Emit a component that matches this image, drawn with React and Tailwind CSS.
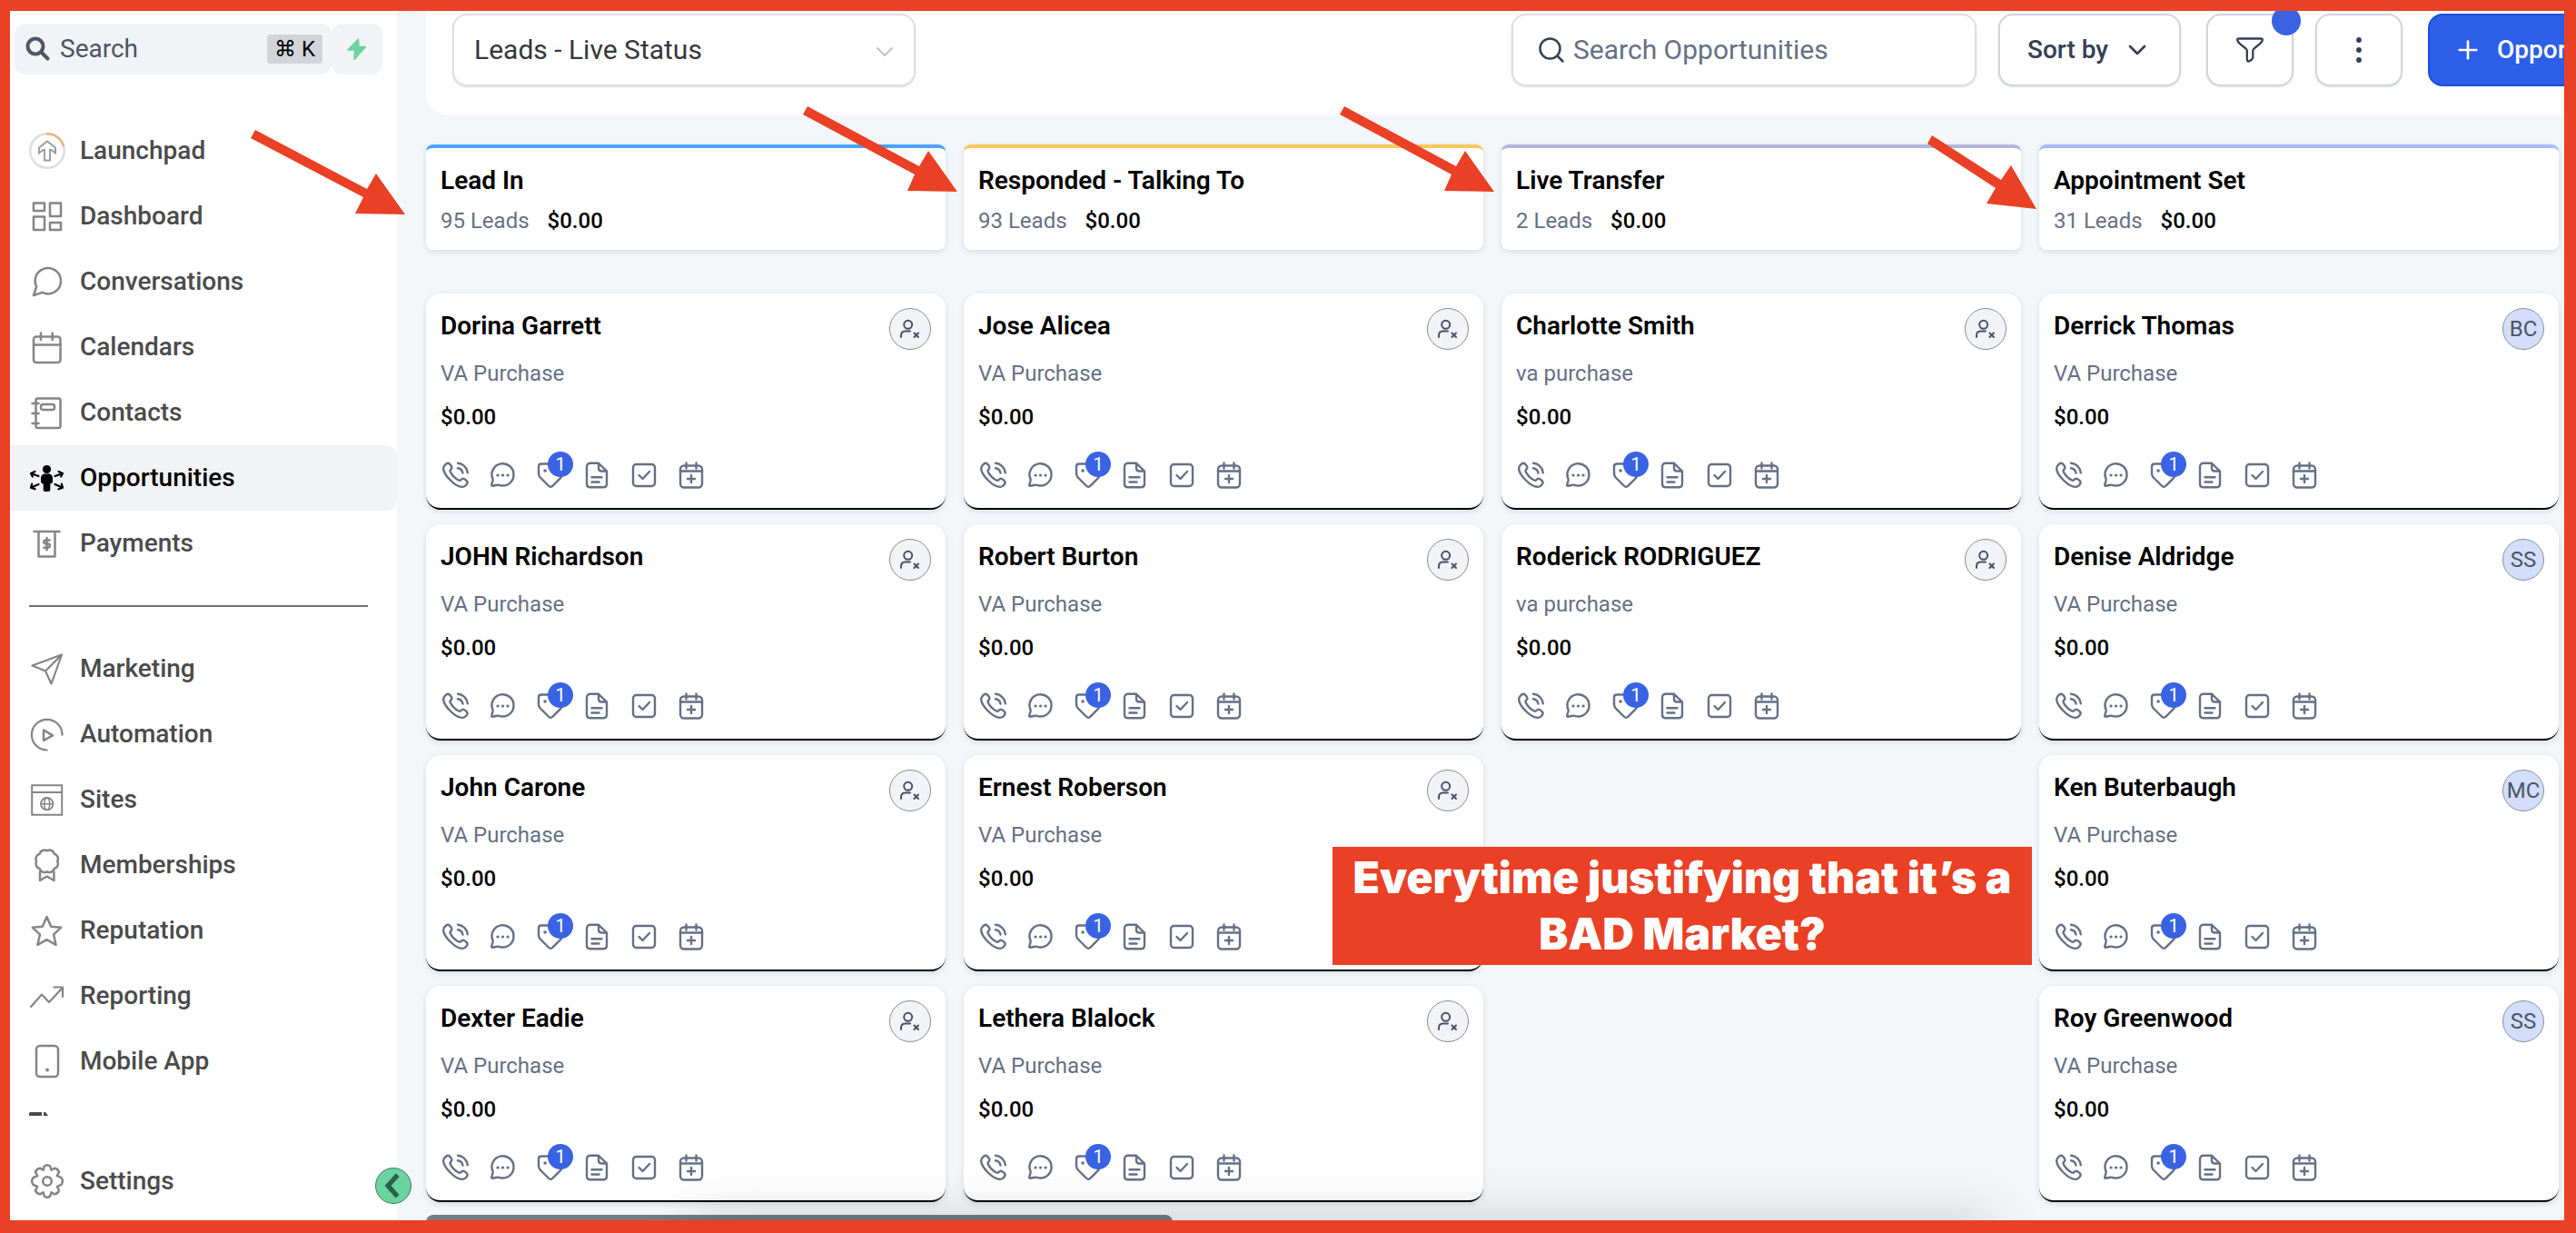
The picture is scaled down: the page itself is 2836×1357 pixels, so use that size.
import { ChevronDown, Plus } from 'lucide-react';

const NAV_MAIN = [
  { label: 'Launchpad', icon: 'launchpad' },
  { label: 'Dashboard', icon: 'dashboard' },
  { label: 'Conversations', icon: 'conversations' },
  { label: 'Calendars', icon: 'calendars' },
  { label: 'Contacts', icon: 'contacts' },
  { label: 'Opportunities', icon: 'opportunities', active: true },
  { label: 'Payments', icon: 'payments' },
];

const NAV_MORE = [
  { label: 'Marketing', icon: 'marketing' },
  { label: 'Automation', icon: 'automation' },
  { label: 'Sites', icon: 'sites' },
  { label: 'Memberships', icon: 'memberships' },
  { label: 'Reputation', icon: 'reputation' },
  { label: 'Reporting', icon: 'reporting' },
  { label: 'Mobile App', icon: 'mobile' },
];

const STAGES = [
  {
    title: 'Lead In',
    count: 95,
    accent: 'border-[#4aa3ff]',
    cards: [
      { name: 'Dorina Garrett', source: 'VA Purchase' },
      { name: 'JOHN Richardson', source: 'VA Purchase' },
      { name: 'John Carone', source: 'VA Purchase' },
      { name: 'Dexter Eadie', source: 'VA Purchase' },
    ],
  },
  {
    title: 'Responded - Talking To',
    count: 93,
    accent: 'border-[#f7c95c]',
    cards: [
      { name: 'Jose Alicea', source: 'VA Purchase' },
      { name: 'Robert Burton', source: 'VA Purchase' },
      { name: 'Ernest Roberson', source: 'VA Purchase' },
      { name: 'Lethera Blalock', source: 'VA Purchase' },
    ],
  },
  {
    title: 'Live Transfer',
    count: 2,
    accent: 'border-[#b1b7d9]',
    cards: [
      { name: 'Charlotte Smith', source: 'va purchase' },
      { name: 'Roderick RODRIGUEZ', source: 'va purchase' },
    ],
  },
  {
    title: 'Appointment Set',
    count: 31,
    accent: 'border-[#a9bbff]',
    cards: [
      { name: 'Derrick Thomas', source: 'VA Purchase', owner: 'BC' },
      { name: 'Denise Aldridge', source: 'VA Purchase', owner: 'SS' },
      { name: 'Ken Buterbaugh', source: 'VA Purchase', owner: 'MC' },
      { name: 'Roy Greenwood', source: 'VA Purchase', owner: 'SS' },
    ],
  },
];

// Sidebar glyphs, all on a 40 x 40 grid.
const NAV_ICONS = {
  launchpad: (
    <>
      <circle cx="20" cy="20" r="18.8" stroke="#dcdde0" />
      <path d="M20 1.2a18.8 18.8 0 0 1 17.8 12.8" stroke="#eeb27c" />
      <path
        d="M20 9.5 11 16.5v6l4.5-3.5h1.5v11.5h6V19h1.5l4.5 3.5v-6z"
        stroke="#9b9ea4"
        strokeWidth="2"
        strokeLinejoin="miter"
      />
    </>
  ),
  dashboard: (
    <>
      <rect x="5" y="5.5" width="12" height="8.5" />
      <rect x="23" y="5.5" width="12" height="14.5" />
      <rect x="5" y="20.5" width="12" height="14.5" />
      <rect x="23" y="27" width="12" height="8" />
    </>
  ),
  conversations: (
    <path
      transform="scale(1.667)"
      strokeWidth="1.5"
      d="M21 11.5a8.5 8.5 0 0 1-12.3 7.6L3 21l1.9-5.7A8.38 8.38 0 0 1 4 11.5a8.5 8.5 0 1 1 17 0z"
    />
  ),
  calendars: (
    <>
      <rect x="5" y="8.5" width="29.5" height="28.5" rx="3" />
      <path d="M5 17.5h29.5M13 4.5V12M25.7 4.5V12" />
    </>
  ),
  contacts: (
    <>
      <rect x="7.5" y="4.5" width="27" height="32.5" rx="2" />
      <path d="M3.5 10h7M3.5 21h7M3.5 32h7" />
      <rect x="13" y="11" width="15" height="6" rx="2.5" />
    </>
  ),
  opportunities: (
    <>
      <circle cx="19.5" cy="10.5" r="4.6" fill="currentColor" stroke="none" />
      <path
        d="M17 15.5h5c2.5 0 4 2.5 4 5v3.5c0 1.5-1.5 2.5-2.7 2.5V33c0 1.2-.8 2-2 2h-3.6c-1.2 0-2-.8-2-2v-6.5C14.5 26.5 13 25.5 13 24v-3.5c0-2.5 1.5-5 4-5z"
        fill="currentColor"
        stroke="none"
      />
      <path
        d="M10.5 18 2.500 15.200M6.500 13 2 15l1.800 3.500M28.500 18l8-2.800M32.500 13l4.500 2-1.800 3.500M10.500 27l-8 3.500M3.200 26.500 2 30.800l4.500 1.500M28.500 27l8 3.500M35.800 26.500l1.200 4.300-4.500 1.500"
        strokeWidth="2.2"
      />
    </>
  ),
  payments: (
    <>
      <path d="M5.5 7h28M10.5 7v27.5h18V7" />
      <path
        transform="translate(12 13) scale(.63)"
        strokeWidth="4"
        d="M12 1.5v21M17 5.5H10a3.25 3.25 0 0 0 0 6.5h4a3.25 3.25 0 0 1 0 6.5H7"
      />
    </>
  ),
  marketing: <path d="M36 4.5 3.5 16.5 18 22.5l6.5 14zM36 4.5l-18 18" strokeWidth="2.2" />,
  automation: (
    <>
      <path d="M36.5 20.7A16.8 16.8 0 1 0 19.7 37.5" strokeWidth="2.2" />
      <path d="M16 15.5v11.5l10-5.7z" />
    </>
  ),
  sites: (
    <>
      <path d="M3.2 4.3h33v32.5h-33zM3.2 12h33" strokeLinejoin="miter" strokeWidth="2" />
      <circle cx="19.7" cy="24.7" r="6.7" strokeWidth="1.8" />
      <ellipse cx="19.7" cy="24.7" rx="3" ry="6.7" strokeWidth="1.5" />
      <path d="M13 24.7h13.4" strokeWidth="1.5" />
    </>
  ),
  memberships: (
    <>
      <path d="M31.2 15.8A5.5 5.5 0 0 1 27.8 23.9A5.5 5.5 0 0 1 19.7 27.3A5.5 5.5 0 0 1 11.6 23.9A5.5 5.5 0 0 1 8.2 15.8A5.5 5.5 0 0 1 11.6 7.7A5.5 5.5 0 0 1 19.7 4.3A5.5 5.5 0 0 1 27.8 7.7A5.5 5.5 0 0 1 31.2 15.8z" />
      <path d="M12 27.5v9.5l7.7-4.5 7.7 4.5v-9.5" />
    </>
  ),
  reputation: (
    <path
      transform="translate(-.3 1) scale(1.65)"
      strokeWidth="1.5"
      d="M12 2.5 14.9 9l6.6.6-4.9 4.6 1.5 6.9-6.1-3.4-6.1 3.4 1.5-6.9L2.5 9.6 9.1 9z"
    />
  ),
  reporting: <path d="M2 32 14 18.5l8 8.5L37 11M27.5 10.5H37v10.5" strokeWidth="2.2" />,
  mobile: (
    <>
      <rect x="8" y="3" width="24" height="34" rx="4" />
      <circle cx="20" cy="29.5" r="2" fill="currentColor" stroke="none" />
    </>
  ),
  settings: (
    <>
      <circle cx="20" cy="20" r="4.8" />
      <path d="M16.8 3.5q3.2-2.5 6.4 0l1.2 4.2 3.8-2q3.5.5 4.8 4.3l-2.2 4.2 4.5 1.8q3.2 4 0 8l-4.5 1.8 2.2 4.2q-1.3 3.8-4.8 4.3l-3.8-2-1.2 4.2q-3.2 2.5-6.4 0l-1.2-4.2-3.8 2q-3.5-.5-4.8-4.3l2.2-4.2L4.7 24q-3.2-4 0-8l4.5-1.8L7 10q1.3-3.8 4.8-4.3l3.8 2z" />
    </>
  ),
};

// Quick actions on every card, 32 x 32 grid.
const CARD_ACTIONS = [
  {
    label: 'Call',
    icon: (
      <path d="M19 2.8a11.5 11.5 0 0 1 10.8 10.5M19 8.3a6.5 6.5 0 0 1 5.5 5.3M10.8 12.3c.9 2 2.2 3.8 3.8 5.4s3.4 2.9 5.4 3.8c1 .5 1.6.4 2.3-.3 1.2-1.2 2-1.8 3.2-1.4 1 .3 2 1.2 3 2.1 1.2 1.2 1.4 2.6.4 3.9-1.2 1.5-2.2 3-4.5 3.1-3.2.2-8.5-2.3-13.6-7.4S3 11.200 3.200 8c.1-2.300 1.600-3.300 3.100-4.500 1.300-1 2.700-.8 3.900.4 1 1 1.800 2 2.100 3 .4 1.200-.2 2-1.300 3.200-.6.700-.7 1.200-.2 2.200z" />
    ),
  },
  {
    label: 'Message',
    icon: (
      <>
        <path d="M28.5 15.5A12 12 0 0 1 16.5 27.5c-1.5 0-2.9-.2-4.2-.7-.8-.3-1.2-.2-2 0l-5 .9c-.8.1-1.3-.5-1.1-1.200l1.300-4.500c.2-.8.2-1.200 0-2A12 12 0 1 1 28.500 15.500z" />
        <path d="M11 16h.1M16.5 16h.1M22 16h.1" strokeWidth="3.2" />
      </>
    ),
  },
  {
    label: 'Tags',
    badge: '1',
    icon: (
      <>
        <path d="M4 14V6.5C4 4.5 5 3.5 7 3.5h8c1.5 0 2.4.4 3.5 1.5l9.5 9.5c1.7 1.7 1.7 3 0 4.7l-8 8c-2.200 2.200-3.300 2.200-5.200.3l-9.500-9.500C4.300 16.500 4 15.500 4 14z" />
        <path d="M11 11h.1" strokeWidth="3.5" />
      </>
    ),
  },
  {
    label: 'Notes',
    icon: (
      <path d="M18 2.8H9C6.5 2.8 5 4.3 5 6.8v18.5c0 2.5 1.5 4 4 4h14c2.5 0 4-1.5 4-4V11.5zM18 2.8v5.5c0 2 1 3.2 3.2 3.2H27M10.5 18.2h11M10.5 23.5h8" />
    ),
  },
  {
    label: 'Tasks',
    icon: (
      <>
        <rect x="4" y="4" width="24" height="24" rx="3.5" />
        <path d="m10.5 16 4 4 7.5-8" />
      </>
    ),
  },
  {
    label: 'Appointments',
    icon: (
      <>
        <rect x="4" y="5.5" width="24" height="24" rx="4" />
        <path d="M4 11.5h24M10.5 2.5v6M21.5 2.5v6M16 16v8M12 20h8" />
      </>
    ),
  },
];

// Annotation arrows that point at each stage header.
const ARROWS = [
  'M281 143 404 208 414 191 446 236 391 235 400 217 276 152z',
  'M889 117 1012 183 1022 166 1054 211 999 210 1007 192 884 126z',
  'M1480 117 1603 183 1613 166 1645 211 1590 210 1598 192 1475 126z',
  'M2127 149 2203 198 2214 182 2242 230 2187 224 2197 207 2122 158z',
];

function NavItem({ item }) {
  return (
    <a
      href="#"
      className={`flex h-[72px] items-center gap-4 rounded-r-xl pl-[21px] text-[28px] font-medium ${
        item.active ? 'bg-[#f2f3f5] text-black' : 'text-[#4b4b4b]'
      }`}
    >
      <svg
        viewBox="0 0 40 40"
        className={`size-10 ${item.active ? 'text-black' : 'text-[#858585]'}`}
        fill="none"
        stroke="currentColor"
        strokeWidth="2.5"
        strokeLinecap="round"
        strokeLinejoin="round"
        aria-hidden="true"
      >
        {NAV_ICONS[item.icon]}
      </svg>
      <span>{item.label}</span>
    </a>
  );
}

function Sidebar() {
  return (
    <aside className="relative flex w-[426px] shrink-0 flex-col bg-white">
      <div className="flex pt-[14px] pl-[5px]">
        <label className="flex h-14 w-[349px] items-center rounded-xl bg-[#f2f3f5] px-[10px]">
          <svg viewBox="0 0 32 32" className="size-8 shrink-0" fill="none" stroke="#4b5768" strokeWidth="4" strokeLinecap="round" aria-hidden="true">
            <circle cx="13" cy="13" r="8.5" />
            <path d="m19.5 19.5 7 7" />
          </svg>
          <input
            type="text"
            aria-label="Search"
            placeholder="Search"
            className="min-w-0 flex-1 bg-transparent pl-2 text-[28px] text-[#4b5563] outline-none placeholder:text-[#4b5563]"
          />
          <kbd className="flex h-8 items-center rounded bg-[#d1d4d9] px-2 font-[Roboto,'DejaVu_Sans',sans-serif] text-2xl text-black">⌘ K</kbd>
        </label>
        <button type="button" aria-label="Quick actions" className="flex size-14 items-center justify-center rounded-xl bg-[#f2f3f5]">
          <svg viewBox="0 0 24 26" className="h-[26px] w-6" fill="#6bd3a0" stroke="#6bd3a0" strokeWidth="1.5" strokeLinejoin="round" aria-hidden="true">
            <path d="M13.5 2 2 14h7.5l-.5 10.5L21.5 10.5H14z" />
          </svg>
        </button>
      </div>

      <nav className="mt-12">
        {NAV_MAIN.map((item) => (
          <NavItem key={item.label} item={item} />
        ))}
        <hr className="mt-8 mr-8 mb-8 ml-[21px] border-t-2 border-[#6e7080]" />
        {NAV_MORE.map((item) => (
          <NavItem key={item.label} item={item} />
        ))}
        <svg viewBox="0 0 24 4" className="mt-5 ml-[21px] h-1 w-6" fill="#4b4b4b" aria-hidden="true">
          <path d="M1 0h13v4H0V1zM16 0h2l3 4h-5z" />
        </svg>
      </nav>

      <div className="mt-9">
        <NavItem item={{ label: 'Settings', icon: 'settings' }} />
      </div>

      <button
        type="button"
        aria-label="Collapse sidebar"
        className="absolute -right-4 bottom-[18px] z-10 flex size-10 items-center justify-center rounded-full border border-[#3f7a5e] bg-[#6bd3a0]"
      >
        <svg viewBox="0 0 24 24" className="size-7" fill="none" stroke="#27634a" strokeWidth="4.5" aria-hidden="true">
          <path d="M16 2 7 12l9 10" />
        </svg>
      </button>
    </aside>
  );
}

function Toolbar() {
  return (
    <header className="-mr-[100px] flex justify-between rounded-bl-3xl bg-white pt-[3px] pb-8 pl-[29px]">
      <div className="relative">
        <select
          aria-label="Pipeline"
          className="h-20 w-[510px] appearance-none rounded-2xl border-2 border-[#dddfe5] bg-white px-[22px] text-3xl text-[#36373d] shadow-sm"
        >
          <option>Leads - Live Status</option>
        </select>
        <ChevronDown className="pointer-events-none absolute top-[26px] right-[18px] size-8 text-[#c0c2c7]" strokeWidth={1.5} />
      </div>

      <div className="flex gap-7">
        <div className="flex gap-6">
          <label className="flex h-20 w-[512px] items-center rounded-2xl border-2 border-[#dddfe5] bg-white pl-[26px] shadow-sm">
            <svg viewBox="0 0 32 32" className="size-8 shrink-0" fill="none" stroke="#344054" strokeWidth="2.5" strokeLinecap="round" aria-hidden="true">
              <circle cx="14.5" cy="14.5" r="11" />
              <path d="m23 23 5.5 5.5" />
            </svg>
            <input
              type="text"
              aria-label="Search Opportunities"
              placeholder="Search Opportunities"
              className="min-w-0 flex-1 bg-transparent pl-2 text-3xl outline-none placeholder:text-[#667085]"
            />
          </label>
          <button
            type="button"
            className="flex h-20 w-[201px] items-center justify-center gap-4 rounded-2xl border-2 border-[#d0d5dd] bg-white text-[28px] font-medium text-[#344054] shadow-sm"
          >
            Sort by
            <ChevronDown className="size-8" strokeWidth={2} />
          </button>
        </div>
        <div className="flex gap-6">
          <button
            type="button"
            aria-label="Filters"
            className="relative flex h-20 w-24 items-center justify-center rounded-2xl border-2 border-[#d0d5dd] bg-white shadow-sm"
          >
            <svg viewBox="0 0 32 32" className="size-8" fill="none" stroke="#344054" strokeWidth="2.3" strokeLinejoin="round" aria-hidden="true">
              <path d="M3.5 3.5h25c1 0 1.500.8 1.300 1.800-.3 1.700-1.300 2.700-3 4.100L20.500 14.500c-.9.8-1.200 1.300-1.200 2.500v7c0 1.500-.4 2-1.500 2.700l-2 1.300c-1.500 1-3 .5-3-1.500V17c0-1.200-.3-1.700-1.200-2.500L5.200 9.400C3.500 8 2.500 7 2.200 5.300 2 4.300 2.500 3.500 3.500 3.500z" />
            </svg>
            <span className="absolute -top-2.5 -right-2.5 size-8 rounded-full bg-[#3a63e4]" />
          </button>
          <button
            type="button"
            aria-label="More options"
            className="flex h-20 w-24 items-center justify-center rounded-2xl border-2 border-[#d0d5dd] bg-white shadow-sm"
          >
            <svg viewBox="0 0 32 32" className="size-8" fill="#344054" aria-hidden="true">
              <circle cx="16" cy="5" r="2.9" />
              <circle cx="16" cy="16" r="2.9" />
              <circle cx="16" cy="27" r="2.9" />
            </svg>
          </button>
        </div>
        <button
          type="button"
          className="flex h-20 w-[250px] items-center gap-4 rounded-2xl border-2 border-[#1d4ee0] bg-[#2d5ee8] pl-[26px] text-[28px] font-medium text-white"
        >
          <Plus className="size-8" strokeWidth={2} />
          Opportunity
        </button>
      </div>
    </header>
  );
}

function Owner({ initials }) {
  if (initials) {
    return (
      <span className="flex size-[46px] items-center justify-center rounded-full border border-[#8b8f98] bg-[#d3defb] text-2xl text-[#4b5567]">
        {initials}
      </span>
    );
  }
  return (
    <span className="flex size-[46px] items-center justify-center rounded-full border border-[#8b8b8f] bg-[#f2f3f7]">
      <svg viewBox="0 0 24 24" className="size-6" fill="none" stroke="#475069" strokeWidth="2" strokeLinecap="round" aria-hidden="true">
        <circle cx="9.7" cy="7.3" r="4.5" />
        <path d="M2 21v-1.5c0-3 1.5-5 4.5-5H12M16.5 16.5 21 21M21 16.5 16.5 21" />
      </svg>
    </span>
  );
}

function LeadCard({ card }) {
  return (
    <article className="h-[238px] rounded-2xl border-b-2 border-black bg-white px-4 pt-4 shadow-[0_2px_6px_rgba(16,24,40,0.12)]">
      <div className="flex justify-between">
        <h3 className="pt-0.5 text-[28px] leading-9 font-semibold">{card.name}</h3>
        <Owner initials={card.owner} />
      </div>
      <p className="mt-2.5 text-2xl text-[#667085]">{card.source}</p>
      <p className="mt-4 text-2xl font-medium">$0.00</p>
      <div className="mt-8 flex gap-5">
        {CARD_ACTIONS.map((action) => (
          <button key={action.label} type="button" aria-label={action.label} className="relative">
            <svg
              viewBox="0 0 32 32"
              className="size-8"
              fill="none"
              stroke="#667085"
              strokeWidth="2.4"
              strokeLinecap="round"
              strokeLinejoin="round"
              aria-hidden="true"
            >
              {action.icon}
            </svg>
            {action.badge && (
              <span className="absolute -top-2.5 -right-2.5 flex size-7 items-center justify-center rounded-full bg-[#3a63e4] text-xl text-white">
                {action.badge}
              </span>
            )}
          </button>
        ))}
      </div>
    </article>
  );
}

function Stage({ stage }) {
  return (
    <section className="w-[572px] shrink-0">
      <div className={`h-[116px] rounded-lg border-t-4 bg-white px-4 pt-[18px] shadow-[0_2px_6px_rgba(16,24,40,0.12)] ${stage.accent}`}>
        <h2 className="text-[28px] leading-9 font-semibold">{stage.title}</h2>
        <p className="mt-2.5 flex gap-5 text-2xl">
          <span className="text-[#667085]">{stage.count} Leads</span>
          <span className="font-medium">$0.00</span>
        </p>
      </div>
      <div className="mt-12 flex flex-col gap-4">
        {stage.cards.map((card) => (
          <LeadCard key={card.name} card={card} />
        ))}
      </div>
    </section>
  );
}

export default function App() {
  return (
    <div className="relative flex h-screen overflow-hidden border-t-12 border-r-13 border-b-14 border-l-11 border-[#ea4025] bg-[#f3f7fa] font-[Roboto,sans-serif] text-black">
      <Sidebar />
      <main className="min-w-0 flex-1 pl-8">
        <Toolbar />
        <div className="flex gap-5 pt-8">
          {STAGES.map((stage) => (
            <Stage key={stage.title} stage={stage} />
          ))}
        </div>
        <div className="mt-3.5 h-4 w-[822px] rounded-full bg-[#797c7f]" />
      </main>

      {/* soft shade that rises from the bottom edge */}
      <div className="pointer-events-none absolute top-full right-[630px] left-[750px] h-10 shadow-[0_0_60px_rgba(0,0,0,0.2)]" />

      <svg className="pointer-events-none absolute -top-3 -left-[11px] h-[300px] w-[2300px]" fill="#ea4025" aria-hidden="true">
        {ARROWS.map((d) => (
          <path key={d} d={d} />
        ))}
      </svg>
      <p className="absolute top-[920px] left-[1456px] flex h-[130px] w-[770px] items-center justify-center bg-[#ea4025] text-center font-[Inter,sans-serif] text-5xl leading-[62px] font-black text-white">
        Everytime justifying that it’s a
        <br />
        BAD Market?
      </p>
    </div>
  );
}
